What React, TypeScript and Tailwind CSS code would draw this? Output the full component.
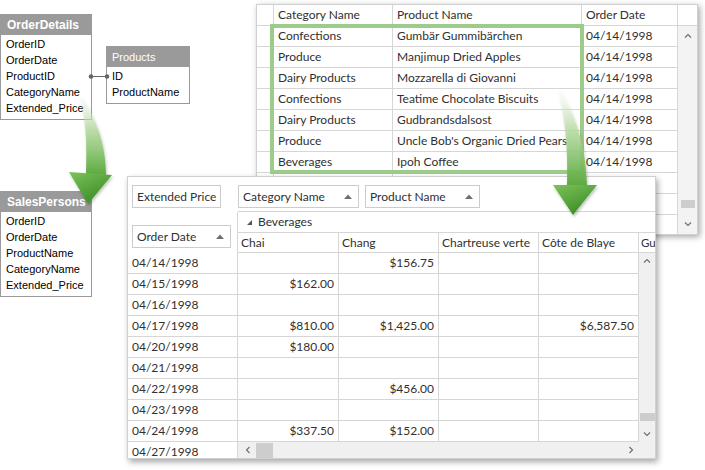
import React from "react";

const topRows = [
  ["Confections", "Gumbär Gummibärchen", "04/14/1998"],
  ["Produce", "Manjimup Dried Apples", "04/14/1998"],
  ["Dairy Products", "Mozzarella di Giovanni", "04/14/1998"],
  ["Confections", "Teatime Chocolate Biscuits", "04/14/1998"],
  ["Dairy Products", "Gudbrandsdalsost", "04/14/1998"],
  ["Produce", "Uncle Bob's Organic Dried Pears", "04/14/1998"],
  ["Beverages", "Ipoh Coffee", "04/14/1998"],
  ["", "", ""],
  ["", "", ""],
  ["", "", ""],
];

const dates = [
  "04/14/1998",
  "04/15/1998",
  "04/16/1998",
  "04/17/1998",
  "04/20/1998",
  "04/21/1998",
  "04/22/1998",
  "04/23/1998",
  "04/24/1998",
  "04/27/1998",
];

// Chai, Chang, Chartreuse verte, Côte de Blaye
const pivotData = [
  ["", "$156.75", "", ""],
  ["$162.00", "", "", ""],
  ["", "", "", ""],
  ["$810.00", "$1,425.00", "", "$6,587.50"],
  ["$180.00", "", "", ""],
  ["", "", "", ""],
  ["", "$456.00", "", ""],
  ["", "", "", ""],
  ["$337.50", "$152.00", "", ""],
];

function Chevron({ dir }: { dir: "up" | "down" | "left" | "right" }) {
  const d = {
    up: "M1 5.5 L4 2.5 L7 5.5",
    down: "M1 2.5 L4 5.5 L7 2.5",
    left: "M5.5 1 L2.5 4 L5.5 7",
    right: "M2.5 1 L5.5 4 L2.5 7",
  }[dir];
  return (
    <svg width="8" height="8" viewBox="0 0 8 8">
      <path d={d} fill="none" stroke="#707070" strokeWidth="1.2" />
    </svg>
  );
}

function SortUp() {
  return (
    <svg width="8" height="5" viewBox="0 0 8 5">
      <path d="M0 5 L4 0.5 L8 5 Z" fill="#707070" />
    </svg>
  );
}

function Entity({
  title,
  fields,
  bold,
  className,
}: {
  title: string;
  fields: string[];
  bold?: boolean;
  className: string;
}) {
  return (
    <div className={`absolute border border-[#9a9a9a] bg-white ${className}`}>
      <div
        className={`h-[20px] bg-[#9a9a9a] leading-[20px] text-white ${
          bold ? "px-[6px] text-[12px] font-bold" : "px-[5px] text-[11px]"
        }`}
      >
        {title}
      </div>
      <div className="pt-[1px] pb-[3px]">
        {fields.map((f) => (
          <div key={f} className="h-[16px] px-[5px] text-[11px] leading-[16px] text-black">
            {f}
          </div>
        ))}
      </div>
    </div>
  );
}

function FieldBtn({ label, w, sort }: { label: string; w: string; sort?: boolean }) {
  return (
    <div
      className={`flex h-[23px] shrink-0 items-center justify-between whitespace-nowrap border border-[#cccccc] bg-white pl-[4px] pr-[6px] ${w}`}
    >
      <span>{label}</span>
      {sort && <SortUp />}
    </div>
  );
}

export default function App() {
  return (
    <div className="relative h-[470px] w-[705px] overflow-hidden bg-white font-['Liberation_Sans',Arial,sans-serif]">
      {/* Data source diagram */}
      <Entity
        title="OrderDetails"
        bold
        fields={["OrderID", "OrderDate", "ProductID", "CategoryName", "Extended_Price"]}
        className="left-0 top-[14px] w-[92px]"
      />
      <Entity title="Products" fields={["ID", "ProductName"]} className="left-[106px] top-[46px] w-[84px]" />
      <Entity
        title="SalesPersons"
        bold
        fields={["OrderID", "OrderDate", "ProductName", "CategoryName", "Extended_Price"]}
        className="left-0 top-[191px] w-[92px]"
      />
      <svg className="absolute left-[88px] top-[72px]" width="22" height="9" viewBox="0 0 22 9">
        <line x1="3" y1="4.5" x2="19" y2="4.5" stroke="#666" strokeWidth="1" />
        <circle cx="3" cy="4.5" r="2.3" fill="#666" />
        <circle cx="19" cy="4.5" r="2.3" fill="#666" />
      </svg>

      {/* Flat grid */}
      <div className="absolute left-[256px] top-[4px] flex h-[231px] w-[442px] overflow-hidden border border-[#d0d0d0] bg-white font-['Lato',sans-serif] text-[12px] text-[#303030] shadow-[2px_2px_6px_rgba(0,0,0,0.35)]">
        <div className="flex shrink-0 flex-col">
          <div className="flex h-[21px] shrink-0 border-b border-[#d6d6d6]">
            <div className="w-[17px] shrink-0 border-r border-[#d6d6d6]" />
            <div className="w-[119px] shrink-0 border-r border-[#d6d6d6] pl-[4px] leading-[20px]">Category Name</div>
            <div className="w-[189px] shrink-0 border-r border-[#d6d6d6] pl-[4px] leading-[20px]">Product Name</div>
            <div className="w-[96px] shrink-0 border-r border-[#d6d6d6] pl-[4px] leading-[20px]">Order Date</div>
          </div>
          {topRows.map((r, i) => (
            <div key={i} className="flex h-[21px] shrink-0 border-b border-[#d6d6d6]">
              <div className="w-[17px] shrink-0 border-r border-[#d6d6d6]" />
              <div className="w-[119px] shrink-0 border-r border-[#d6d6d6] pl-[4px] leading-[20px]">{r[0]}</div>
              <div className="w-[189px] shrink-0 overflow-hidden whitespace-nowrap border-r border-[#d6d6d6] pl-[4px] leading-[20px]">
                {r[1]}
              </div>
              <div className="w-[96px] shrink-0 border-r border-[#d6d6d6] pl-[4px] leading-[20px]">{r[2]}</div>
            </div>
          ))}
        </div>
        <div className="flex flex-1 flex-col">
          <div className="h-[21px] shrink-0 border-b border-[#d6d6d6]" />
          <div className="flex flex-1 flex-col items-center bg-[#f3f3f3]">
            <div className="flex h-[20px] items-center">
              <Chevron dir="up" />
            </div>
            <div className="flex-1" />
            <div className="mb-[6px] h-[8px] w-[14px] bg-[#cdcdcd]" />
            <div className="flex h-[20px] items-center">
              <Chevron dir="down" />
            </div>
          </div>
        </div>
      </div>

      {/* selection highlight */}
      <div className="absolute left-[270px] top-[24px] h-[150px] w-[314px] border-[4px] border-[#9dcb8c]" />

      {/* Pivot grid */}
      <div className="absolute left-[127px] top-[176px] flex h-[283px] w-[529px] flex-col overflow-hidden border border-[#d0d0d0] bg-white font-['Lato',sans-serif] text-[12px] text-[#303030] shadow-[2px_3px_6px_rgba(0,0,0,0.35)]">
        {/* filter / data area */}
        <div className="flex h-[35px] shrink-0">
          <div className="w-[110px] shrink-0 pl-[4px] pt-[8px]">
            <FieldBtn label="Extended Price" w="w-[89px]" />
          </div>
          <div className="flex min-w-0 flex-1 gap-[6px] border-b border-[#d6d6d6] pt-[8px]">
            <FieldBtn label="Category Name" w="w-[121px]" sort />
            <FieldBtn label="Product Name" w="w-[115px]" sort />
          </div>
        </div>
        {/* column area */}
        <div className="flex h-[41px] shrink-0">
          <div className="w-[110px] shrink-0 border-r border-[#d6d6d6] pl-[4px] pt-[13px]">
            <FieldBtn label="Order Date" w="w-[99px]" sort />
          </div>
          <div className="flex min-w-0 flex-1 flex-col">
            <div className="flex h-[21px] shrink-0 items-center gap-[6px] border-b border-[#d6d6d6] pl-[9px]">
              <svg width="5" height="5" viewBox="0 0 5 5">
                <path d="M5 0 L5 5 L0 5 Z" fill="#555" />
              </svg>
              <span>Beverages</span>
            </div>
            <div className="flex h-[20px] shrink-0 border-b border-[#d6d6d6] leading-[19px]">
              <div className="w-[101px] shrink-0 border-r border-[#d6d6d6] pl-[3px]">Chai</div>
              <div className="w-[100px] shrink-0 border-r border-[#d6d6d6] pl-[3px]">Chang</div>
              <div className="w-[100px] shrink-0 whitespace-nowrap border-r border-[#d6d6d6] pl-[3px]">Chartreuse verte</div>
              <div className="w-[100px] shrink-0 border-r border-[#d6d6d6] pl-[3px]">Côte de Blaye</div>
              <div className="w-[16px] shrink-0 whitespace-nowrap pl-[2px] text-[11.5px]">Gu</div>
            </div>
          </div>
        </div>
        {/* body */}
        <div className="flex min-h-0 flex-1">
          <div className="w-[110px] shrink-0 border-r border-[#d6d6d6]">
            {dates.map((d) => (
              <div key={d} className="h-[21px] border-b border-[#d6d6d6] pl-[4px] leading-[20px]">
                {d}
              </div>
            ))}
          </div>
          <div className="flex min-w-0 flex-1 flex-col">
            <div className="flex">
              <div className="flex shrink-0 flex-col">
                {pivotData.map((r, i) => (
                  <div key={i} className="flex h-[21px] border-b border-[#d6d6d6] leading-[20px]">
                    <div className="w-[101px] shrink-0 border-r border-[#d6d6d6] pr-[4px] text-right">{r[0]}</div>
                    <div className="w-[100px] shrink-0 border-r border-[#d6d6d6] pr-[4px] text-right">{r[1]}</div>
                    <div className="w-[100px] shrink-0 border-r border-[#d6d6d6] pr-[4px] text-right">{r[2]}</div>
                    <div className="w-[100px] shrink-0 border-r border-[#d6d6d6] pr-[4px] text-right">{r[3]}</div>
                  </div>
                ))}
              </div>
              <div className="flex flex-1 flex-col items-center bg-[#f0f0f0]">
                <div className="flex h-[16px] items-center">
                  <Chevron dir="up" />
                </div>
                <div className="flex-1" />
                <div className="mb-[5px] h-[8px] w-[15px] bg-[#cdcdcd]" />
                <div className="flex h-[16px] items-center">
                  <Chevron dir="down" />
                </div>
              </div>
            </div>
            <div className="flex h-[16px] shrink-0 items-center bg-[#f0f0f0]">
              <div className="flex w-[401px] shrink-0 items-center pl-[6px]">
                <Chevron dir="left" />
                <div className="ml-[4px] h-[15px] w-[17px] bg-[#cdcdcd]" />
                <div className="flex-1" />
                <div className="mr-[4px]">
                  <Chevron dir="right" />
                </div>
              </div>
            </div>
          </div>
        </div>
      </div>

      {/* arrows */}
      <svg className="pointer-events-none absolute left-0 top-0" width="705" height="470" viewBox="0 0 705 470">
        <defs>
          <linearGradient id="shaftL" x1="0" y1="90" x2="0" y2="176" gradientUnits="userSpaceOnUse">
            <stop offset="0" stopColor="#ffffff" stopOpacity="0" />
            <stop offset="0.45" stopColor="#b5dc9f" stopOpacity="0.8" />
            <stop offset="1" stopColor="#58a83a" />
          </linearGradient>
          <linearGradient id="shaftR" x1="0" y1="84" x2="0" y2="187" gradientUnits="userSpaceOnUse">
            <stop offset="0" stopColor="#ffffff" stopOpacity="0" />
            <stop offset="0.45" stopColor="#b5dc9f" stopOpacity="0.8" />
            <stop offset="1" stopColor="#58a83a" />
          </linearGradient>
          <linearGradient id="head" x1="0" y1="0" x2="0.6" y2="1">
            <stop offset="0" stopColor="#7cc35a" />
            <stop offset="1" stopColor="#3c8c26" />
          </linearGradient>
          <filter id="sh" x="-30%" y="-30%" width="160%" height="160%">
            <feDropShadow dx="1" dy="2" stdDeviation="1.5" floodColor="#000" floodOpacity="0.25" />
          </filter>
        </defs>
        <g filter="url(#sh)">
          <path d="M79 90 C 90 110 106 135 106 175 L 86 174 C 87 140 86 115 77 90 Z" fill="url(#shaftL)" />
          <path d="M69 172 L 112 175 L 88 204 Z" fill="url(#head)" />
        </g>
        <g filter="url(#sh)">
          <path d="M557 84 C 572 108 586 140 587 186 L 567 186 C 568 150 566 116 555 84 Z" fill="url(#shaftR)" />
          <path d="M553 185 L 597 185 L 573 215 Z" fill="url(#head)" />
        </g>
      </svg>
    </div>
  );
}
